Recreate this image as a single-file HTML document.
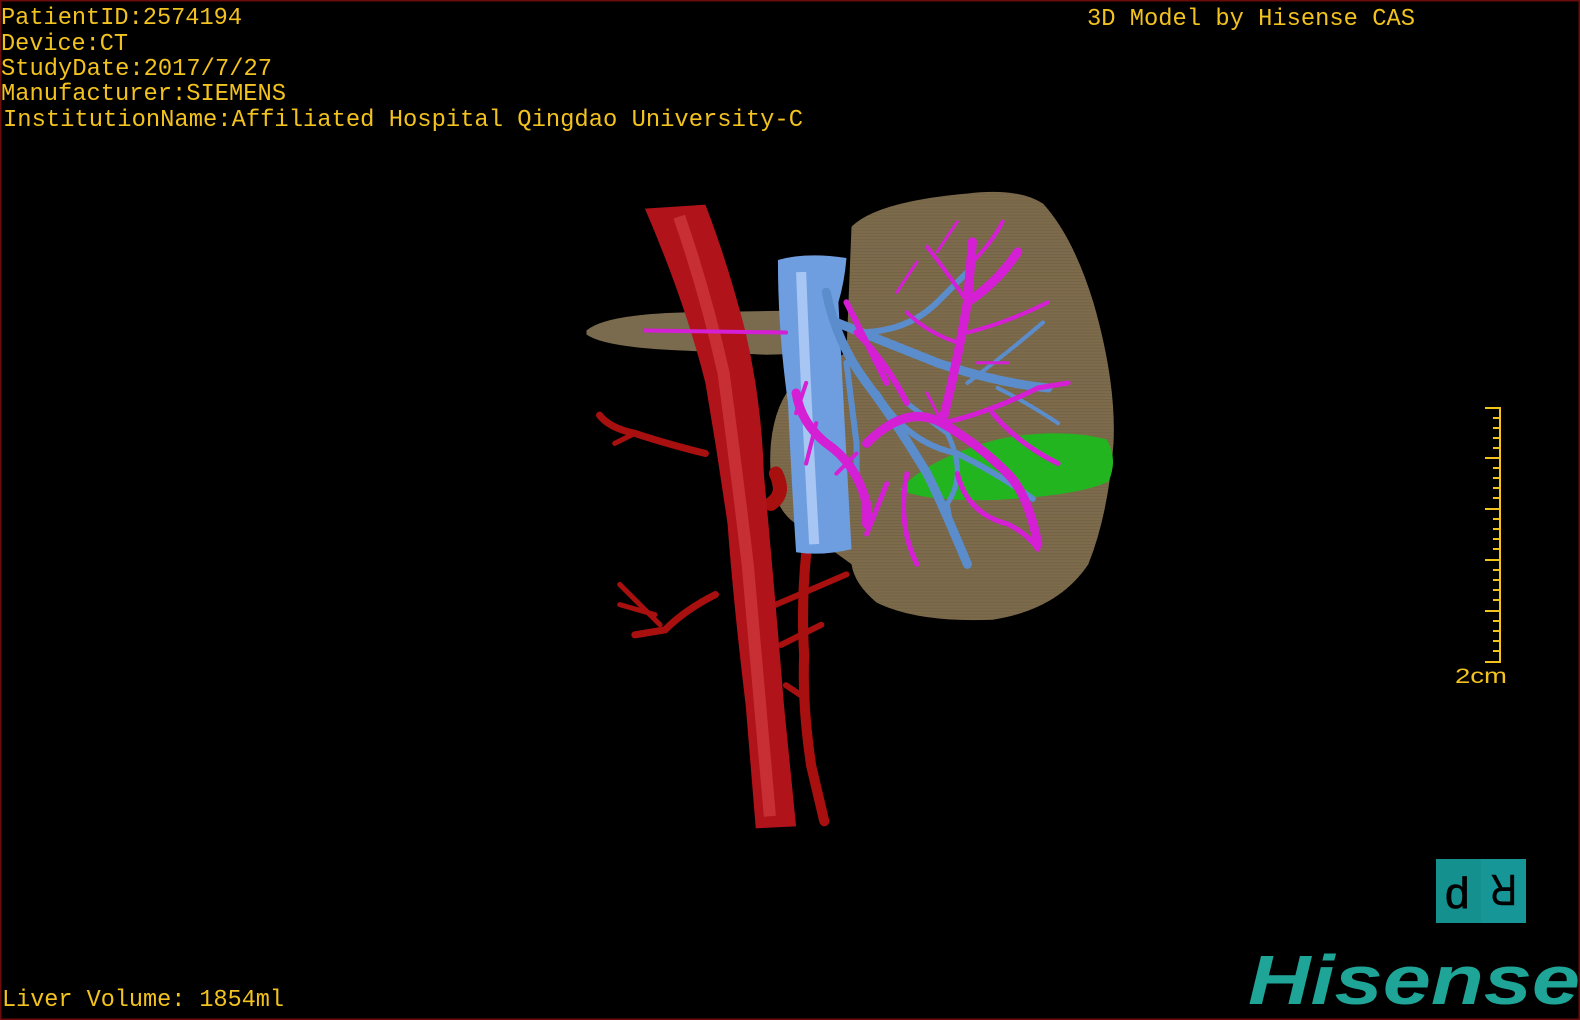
<!DOCTYPE html>
<html><head><meta charset="utf-8"><style>
html,body{margin:0;padding:0;background:#000;}
svg{display:block}
.t{font-family:"Liberation Mono",monospace;fill:#f2c21f;font-size:23.7px}
</style></head><body>
<svg width="1580" height="1020" viewBox="0 0 1580 1020" xmlns="http://www.w3.org/2000/svg">
<defs>
<pattern id="stripes" width="4" height="3" patternUnits="userSpaceOnUse"><rect width="4" height="1" fill="#000" opacity="0.08"/></pattern>
</defs>
<rect x="0" y="0" width="1580" height="1020" fill="#000"/>
<rect x="0.5" y="0.5" width="1579" height="1019" fill="none" stroke="#6a0c0c" stroke-width="2"/>

<text class="t" x="1" y="24" textLength="241" lengthAdjust="spacingAndGlyphs">PatientID:2574194</text>
<text class="t" x="1" y="50" textLength="127" lengthAdjust="spacingAndGlyphs">Device:CT</text>
<text class="t" x="1" y="75" textLength="271" lengthAdjust="spacingAndGlyphs">StudyDate:2017/7/27</text>
<text class="t" x="1" y="100" textLength="285" lengthAdjust="spacingAndGlyphs">Manufacturer:SIEMENS</text>
<text class="t" x="3" y="126" textLength="800" lengthAdjust="spacingAndGlyphs">InstitutionName:Affiliated Hospital Qingdao University-C</text>
<text class="t" x="1087" y="25" textLength="328" lengthAdjust="spacingAndGlyphs">3D Model by Hisense CAS</text>
<text class="t" x="2" y="1006" textLength="282" lengthAdjust="spacingAndGlyphs">Liver Volume: 1854ml</text>

<!-- scale ruler -->
<g stroke="#f2c21f" stroke-width="2">
<line x1="1500" y1="407" x2="1500" y2="663"/>
<line x1="1485" y1="408" x2="1501" y2="408"/><line x1="1485" y1="662" x2="1501" y2="662"/>
<line x1="1485" y1="458" x2="1501" y2="458"/><line x1="1485" y1="509" x2="1501" y2="509"/>
<line x1="1485" y1="560" x2="1501" y2="560"/><line x1="1485" y1="611" x2="1501" y2="611"/>
<path d="M1493 418H1500M1493 428H1500M1493 438H1500M1493 448H1500M1493 468H1500M1493 478H1500M1493 488H1500M1493 498H1500M1493 519H1500M1493 529H1500M1493 539H1500M1493 549H1500M1493 570H1500M1493 580H1500M1493 590H1500M1493 600H1500M1493 621H1500M1493 631H1500M1493 641H1500M1493 651H1500"/>
</g>
<text x="1455" y="683" font-family="Liberation Sans,sans-serif" font-size="21" fill="#f2c21f" textLength="52" lengthAdjust="spacingAndGlyphs">2cm</text>

<!-- orientation box -->
<rect x="1436" y="859" width="90" height="64" fill="#14918f"/>
<rect x="1481" y="859" width="45" height="64" fill="#17999a" opacity="0.7"/>
<text x="1445" y="908" font-family="Liberation Sans,sans-serif" font-size="44" fill="#000" stroke="#000" stroke-width="0.8">d</text>
<text transform="translate(1517 875) rotate(180)" font-family="Liberation Sans,sans-serif" font-size="44" fill="#000" stroke="#000" stroke-width="0.5" textLength="27" lengthAdjust="spacingAndGlyphs">R</text>

<!-- Hisense logo -->
<text x="1248" y="1004" font-family="Liberation Sans,sans-serif" font-weight="bold" font-style="italic" font-size="70" fill="#1fa597" textLength="332" lengthAdjust="spacingAndGlyphs">Hisense</text>

<g transform="scale(1.0077)">
<!-- liver -->
<path d="M582 328 Q600 312 680 310 L800 308 L830 312 L830 350 L760 352 L680 348 Q600 345 582 332Z" fill="#7a6a4e"/>
<path d="M845 225 Q870 200 960 192 Q1010 186 1035 202 Q1065 235 1085 300 Q1108 380 1105 440 Q1100 510 1080 560 Q1050 605 985 615 Q910 618 870 598 Q848 580 845 560 L790 520 Q760 500 765 440 Q770 390 800 370 L840 350Z" fill="#7d6b4c"/>
<path d="M845 225 Q870 200 960 192 Q1010 186 1035 202 Q1065 235 1085 300 Q1108 380 1105 440 Q1100 510 1080 560 Q1050 605 985 615 Q910 618 870 598 Q848 580 845 560 L790 520 Q760 500 765 440 Q770 390 800 370 L840 350Z" fill="url(#stripes)"/>
<!-- red arteries lower -->
<g fill="none" stroke="#a8100f" stroke-linecap="round">
<path d="M700 450 Q660 440 630 430 Q605 425 595 412" stroke-width="7"/>
<path d="M630 430 L610 440" stroke-width="5"/>
<path d="M710 590 Q680 605 660 625 L630 630" stroke-width="7"/>
<path d="M650 610 L615 600 M655 620 L615 580" stroke-width="5"/>
<path d="M800 550 Q795 600 798 650 Q796 700 805 760 L818 815" stroke-width="10"/>
<path d="M770 600 L840 570 M775 640 L815 620 M795 690 L780 680" stroke-width="6"/>
<path d="M770 470 Q780 490 765 500" stroke-width="14"/>
</g>
<!-- aorta -->
<path d="M640 207 L700 203 Q722 260 740 330 Q756 400 758 470 Q770 600 778 700 L790 820 L750 822 L740 700 Q728 600 722 520 Q712 450 700 380 Q680 300 640 207Z" fill="#b0131a"/>
<path d="M674 215 Q700 290 718 370 Q730 460 742 560 Q752 680 764 810" fill="none" stroke="#d23c40" stroke-width="12" opacity="0.7"/>
<!-- IVC -->
<path d="M772 258 Q800 250 840 256 Q838 280 832 300 Q838 420 845 545 Q815 552 790 548 Q785 470 782 400 Q772 330 772 258Z" fill="#6f9ee0"/>
<path d="M795 270 Q800 400 808 540" fill="none" stroke="#b5d0f8" stroke-width="10" opacity="0.8"/>
<!-- green -->
<path d="M893 486 Q920 455 990 436 Q1050 424 1098 436 Q1110 455 1100 478 Q1070 492 990 496 Q920 498 893 486Z" fill="#22b520"/>
<!-- blue branches -->
<g fill="none" stroke="#5b8dcc" stroke-linecap="round">
<path d="M820 290 Q830 340 860 380 Q890 420 920 470 Q935 500 960 560" stroke-width="9"/>
<path d="M830 320 Q880 340 930 360 Q990 380 1040 385" stroke-width="9"/>
<path d="M850 330 Q900 330 930 300 L960 270" stroke-width="6"/>
<path d="M840 360 Q845 400 850 440 L850 470" stroke-width="6"/>
<path d="M870 390 Q900 440 950 450 Q990 470 1025 495" stroke-width="6"/>
<path d="M900 400 L940 430 Q960 470 940 500 L945 530" stroke-width="5"/>
<path d="M960 380 Q1000 350 1035 320 M990 385 Q1020 400 1050 420" stroke-width="4"/>
</g>
<!-- magenta branches -->
<g fill="none" stroke="#d41fd4" stroke-linecap="round">
<path d="M640 328 L780 330" stroke-width="4"/>
<path d="M790 390 Q795 420 820 440 Q850 460 860 500 L860 520" stroke-width="9"/>
<path d="M935 420 Q950 360 960 300 L965 240 M960 300 Q990 280 1010 250" stroke-width="9"/>
<path d="M860 440 Q900 400 935 420 Q970 440 1000 470 Q1020 490 1030 540" stroke-width="9"/>
<path d="M900 400 Q880 360 850 330 M880 380 L840 300" stroke-width="6"/>
<path d="M935 420 Q980 410 1030 385 L1060 380 M985 410 Q1010 440 1050 460" stroke-width="5"/>
<path d="M960 300 Q940 270 920 245 M965 260 Q985 240 995 220 M950 340 Q920 330 900 310 M960 330 Q1000 320 1040 300" stroke-width="4"/>
<path d="M900 470 Q890 520 910 560 M880 480 L860 530 M950 470 Q960 510 1000 520 Q1020 530 1030 545" stroke-width="5"/>
<path d="M935 420 L920 390 M970 360 L1000 360 M890 290 L910 260 M930 250 L950 220" stroke-width="3"/>
<path d="M800 380 L790 410 M810 420 L800 460 M850 450 L830 470" stroke-width="4"/>
</g>
</g>
</svg>
</body></html>
